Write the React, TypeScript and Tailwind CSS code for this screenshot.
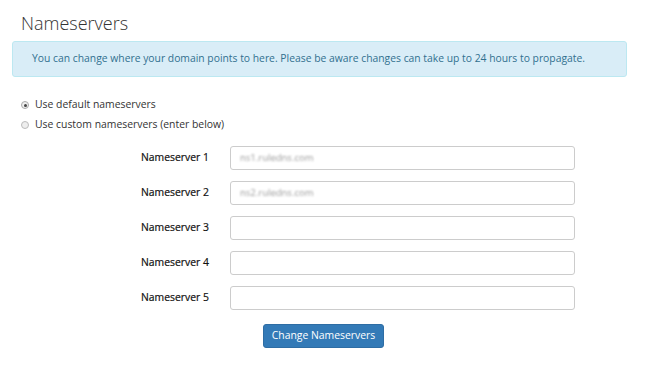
import React from "react";

const rows = [
  { label: "Nameserver 1", value: "ns1.ruledns.com" },
  { label: "Nameserver 2", value: "ns2.ruledns.com" },
  { label: "Nameserver 3", value: "" },
  { label: "Nameserver 4", value: "" },
  { label: "Nameserver 5", value: "" },
];

export default function App() {
  return (
    <div
      className="w-[650px] h-[367px] bg-white text-[#333] overflow-hidden"
      style={{ fontFamily: '"Open Sans", "Liberation Sans", sans-serif' }}
    >
      <div className="pl-[12px] pr-[23px] pt-[11px]">
        <h2 className="pl-[9px] text-[18px] leading-[24px] font-light text-[#333]">Nameservers</h2>
        <div className="mt-[6px] h-[36px] flex items-center px-[19px] bg-[#d9edf7] border border-[#bce8f1] rounded-[3px] text-[#31708f] text-[10.35px] whitespace-nowrap">
          You can change where your domain points to here. Please be aware changes can take up to 24 hours to propagate.
        </div>
        <div className="mt-[20px] pl-[9px] flex flex-col gap-[4px] text-[10.4px] text-[#333]">
          <label className="flex items-center h-[16px]">
            <span className="w-[8px] h-[8px] rounded-full border border-[#aaa] bg-[#eee] flex items-center justify-center mr-[6px]">
              <span className="w-[3px] h-[3px] rounded-full bg-[#444]" />
            </span>
            Use default nameservers
          </label>
          <label className="flex items-center h-[16px]">
            <span className="w-[8px] h-[8px] rounded-full border border-[#bbb] bg-[#eee] mr-[6px]" />
            Use custom nameservers (enter below)
          </label>
        </div>
        <div className="mt-[13px] flex flex-col gap-[11px]">
          {rows.map((r) => (
            <div key={r.label} className="flex items-center">
              <div className="w-[218px] pl-[129px] text-[10.4px] text-[#111] [-webkit-text-stroke:0.2px_#111]">{r.label}</div>
              <div className="w-[345px] h-[24px] border border-[#ccc] rounded-[3px] bg-white flex items-center px-[9px]">
                {r.value && (
                  <span className="text-[9.5px] text-[#999] blur-[1.2px]">{r.value}</span>
                )}
              </div>
            </div>
          ))}
        </div>
        <div className="mt-[11px] pl-[251px]">
          <button className="w-[121px] h-[24px] bg-[#337ab7] border border-[#2e6da4] rounded-[3px] text-white text-[10.4px]">
            Change Nameservers
          </button>
        </div>
      </div>
    </div>
  );
}
